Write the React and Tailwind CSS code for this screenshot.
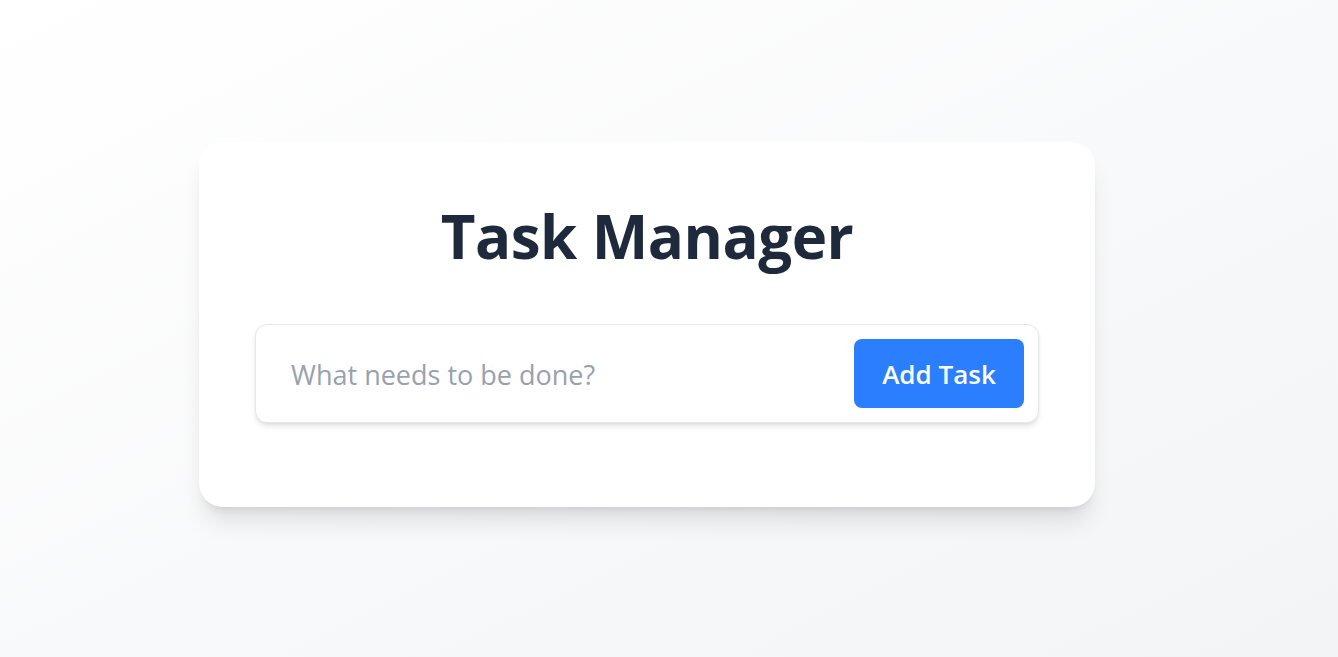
import React, { useState } from "react";

export default function App() {
  const [value, setValue] = useState("");
  return (
    <div
      className="min-h-screen w-full bg-gradient-to-br from-white to-[#f3f4f6] flex items-center justify-center pr-[44px] pb-[8px]"
      style={{ fontFamily: '"Open Sans", "Noto Sans", sans-serif' }}
    >
      <div className="w-[896px] bg-white rounded-[24px] shadow-xl px-14 pt-[64px] pb-[84px]">
        <h1 className="text-center text-[60px] leading-[60px] font-bold text-[#1e293b] tracking-[-0.5px] mb-[58px]">
          Task Manager
        </h1>
        <div className="flex items-center rounded-xl border border-gray-200 shadow-md bg-white p-[14px] pl-[35px]">
          <input
            autoFocus
            value={value}
            onChange={(e) => setValue(e.target.value)}
            placeholder="What needs to be done?"
            className="flex-1 min-w-0 outline-none text-[27px] leading-[38px] pt-[3px] text-gray-700 placeholder:text-gray-400 bg-transparent caret-gray-700"
          />
          <button className="w-[170px] h-[69px] rounded-lg bg-blue-500 text-white text-[26px] font-semibold pt-[2px]">
            Add Task
          </button>
        </div>
      </div>
    </div>
  );
}
